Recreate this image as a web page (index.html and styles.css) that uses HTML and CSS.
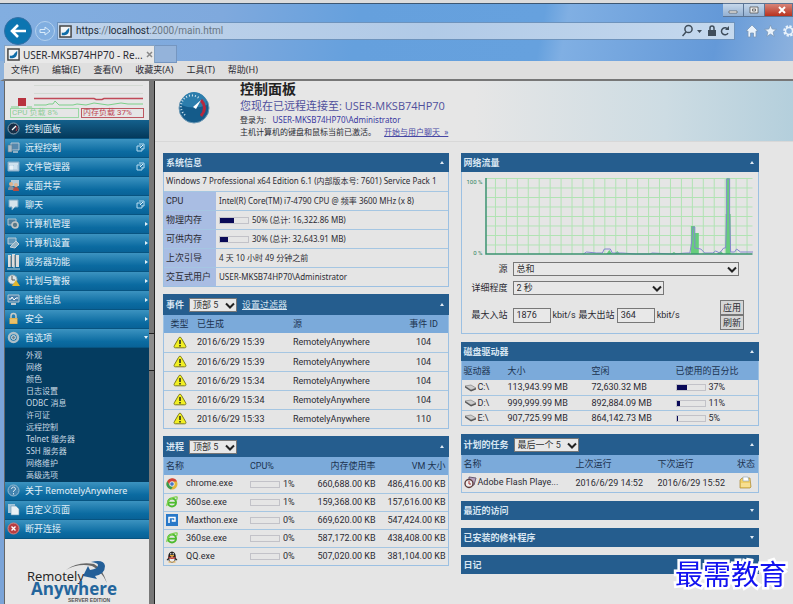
FILE: index.html
```html
<!DOCTYPE html>
<html lang="zh-CN">
<head>
  <meta charset="UTF-8">
  <meta name="viewport" content="width=device-width, initial-scale=1">
  <title>USER-MKSB74HP70 - RemotelyAnywhere</title>
  <link rel="stylesheet" href="styles.css">
</head>
<body>
  <!-- shared icons -->
  <svg class="defs" width="0" height="0">
    <symbol id="favicon" viewBox="0 0 14 14"><path d="M1 1h12v12H1z" fill="#f2f5f7" stroke="#444" stroke-width="1.6"/><path d="M3 8q4 1 5-2l3-3v3q-1 5-5 5H3z" fill="#0f6da8"/></symbol>
    <symbol id="chevron" viewBox="0 0 10 7"><path d="M1 1.5l4 4 4-4" fill="none" stroke="#222" stroke-width="2"/></symbol>
    <symbol id="popout" viewBox="0 0 9 9"><path d="M3 1h5v5H6M5 3H1v5h5V5" fill="none" stroke="#b9dcf0"/><path d="M4 5l3-3" stroke="#e4f3fb"/></symbol>
    <symbol id="warning" viewBox="0 0 14 13"><path d="M7 1.2c.8 0 1 .4 1.4 1.1l4.3 7.5c.6 1.2.2 2-1.1 2H2.4c-1.3 0-1.7-.8-1.1-2l4.300-7.500C6 1.600 6.200 1.200 7 1.200z" fill="#f2ef22" stroke="#7c7a1c"/><path d="M7 4v4M7 9v1.500" stroke="#222" stroke-width="1.500"/></symbol>
    <symbol id="drive" viewBox="0 0 13 8"><path d="M1 2l6-1 5 3-5 2z" fill="#ccc" stroke="#777" stroke-width=".6"/><path d="M1 2l6 4v1.500L1 3.500zM7 6l5-2v1.500L7 7.500z" fill="#555"/></symbol>
    <symbol id="browser360" viewBox="0 0 12 12"><circle cx="6" cy="6.500" r="4" fill="none" stroke="#4dbb2e" stroke-width="2"/><path d="M3 6.700h7" stroke="#4dbb2e" stroke-width="1.800"/><path d="M1 10C0 6 6 0 11 1c.5 1 0 2-.5 3" fill="none" stroke="#7ed24f" stroke-width="1.300"/></symbol>
  </svg>

  <div class="titlebar">
    <div class="window-buttons">
      <button aria-label="最小化"><svg width="10" height="8"><path d="M1 5h8v2H1z" fill="#fff" stroke="#555" stroke-width=".7"/></svg></button>
      <button aria-label="最大化"><svg width="10" height="8"><path d="M1 1h8v6H1zM3.500 3h3v2h-3z" fill="#eee" stroke="#555" stroke-width=".8"/></svg></button>
      <button class="close" aria-label="关闭"><svg width="10" height="8"><path d="M2 1l6 6M8 1L2 7" stroke="#fff" stroke-width="2"/></svg></button>
    </div>
    <div class="navbar">
      <button class="back" aria-label="后退"><svg width="18" height="16" viewBox="0 0 18 16"><path d="M17 8H3M9 2L3 8l6 6" fill="none" stroke="#fff" stroke-width="2.600"/></svg></button>
      <button class="forward" aria-label="前进"><svg width="12" height="12" viewBox="0 0 12 12"><path d="M1 4.500h5V2l5 4-5 4V7.500H1z" fill="none" stroke="#d9ebfa"/></svg></button>
      <div class="address">
        <svg width="13" height="13"><use href="#favicon"/></svg>
        <span class="url"><b>https</b>://<b>localhost</b>:2000/main.html</span>
        <svg width="48" height="14" viewBox="0 0 48 14"><g fill="none" stroke="#3f4d5b" stroke-width="1.500"><circle cx="6.500" cy="5" r="3.600"/><path d="M4 8l-3.500 4"/><path d="M46 5.500a3.500 3.500 0 1 0 0 3.500"/><path d="M28 6V4a2 2 0 0 1 4 0v2"/></g><path d="M15 6h5l-2.500 3zM26 6h8v6h-8zM47 2v4h-4z" fill="#3f4d5b"/></svg>
      </div>
      <svg class="tools" width="50" height="14" viewBox="0 0 50 14"><g fill="#e9f2fb" stroke="#7b98b8" stroke-width=".8"><path d="M1 7l6-6 6 6h-2v6H8.500V9h-3v4H3V7z"/><path d="M25.500 1l1.700 4 4.300.3-3.300 2.800 1 4.400-3.700-2.400-3.700 2.400 1-4.400-3.300-2.800 4.300-.3z"/></g><circle cx="44" cy="7" r="4.500" fill="none" stroke="#e9f2fb" stroke-width="2.600" stroke-dasharray="2.200 1.300"/><circle cx="44" cy="7" r="3.500" fill="none" stroke="#e9f2fb" stroke-width="1.500"/></svg>
    </div>
    <div class="tabs">
      <div class="tab"><svg width="13" height="13"><use href="#favicon"/></svg><span>USER-MKSB74HP70 - Re...</span><button aria-label="关闭标签页"><svg width="7" height="7" viewBox="0 0 7 7"><path d="M1 1l5 5M6 1L1 6" stroke="#888" stroke-width="1.500"/></svg></button></div>
      <button class="new-tab" aria-label="新标签页"></button>
    </div>
  </div>

  <nav class="menubar">
    <button>文件(F)</button><button>编辑(E)</button><button>查看(V)</button><button>收藏夹(A)</button><button>工具(T)</button><button>帮助(H)</button>
  </nav>

  <div class="page">
    <aside class="sidebar">
      <div class="load">
        <svg width="134" height="24" viewBox="0 0 134 24"><path d="M24 1.500h109M24 9.500h109" stroke="#d3d9d3"/><path d="M1 23h8M17 23h5" stroke="#7ccf8a"/><path d="M8 14h8v8H8z" fill="#b8323f"/><path d="M24 14.500h60l2 1h6l2-1h39" fill="none" stroke="#c04a58" stroke-width="1.500"/><path d="M24 21h12l3-1h4l2-3 4 4h14l4-1 9 1 8-2 14 2 13-2 7 1h15" fill="none" stroke="#7ccf8a"/></svg>
        <div class="load-labels"><span class="cpu">CPU 负载 8%</span><span class="mem">内存负载 37%</span></div>
      </div>
      <ul class="menu">
        <li class="active"><a href="#"><svg width="13" height="13" viewBox="0 0 13 13"><circle cx="6.500" cy="6.500" r="5.500" fill="#172f47" stroke="#8ba4b5"/><path d="M5 8l4-4" stroke="#fff" stroke-width="1.300"/><path d="M9.500 4q1.500 3-.5 5" fill="none" stroke="#b9404a"/></svg><span>控制面板</span></a></li>
        <li><a href="#"><svg width="13" height="13" viewBox="0 0 13 13"><path d="M4 2h8v7H4z" fill="#5688ad" stroke="#b7c6d2"/><path d="M1 4h4v7H1z" fill="#aebcc6" stroke="#607d91" stroke-width=".6"/><path d="M6 11h5" stroke="#b7c6d2" stroke-width="1.500"/></svg><span>远程控制</span><svg class="pop"><use href="#popout"/></svg></a></li>
        <li><a href="#"><svg width="13" height="13" viewBox="0 0 13 13"><path d="M1 2h11v9H1z" fill="#b5d0e3" stroke="#86abc5"/><path d="M2 4h9M3 6h3v3H3zM7 6h3M7 8h3" stroke="#e6f1f8" fill="#e6f1f8"/></svg><span>文件管理器</span><svg class="pop"><use href="#popout"/></svg></a></li>
        <li><a href="#"><svg width="13" height="13" viewBox="0 0 13 13"><path d="M4 1h8v6H4z" fill="#b3c9d8"/><circle cx="4" cy="5" r="2" fill="#ddb28b"/><path d="M1 11q0-4 3-4t3 4z" fill="#8a8e99"/><circle cx="9" cy="6" r="2" fill="#e1b692"/><path d="M6 12q0-4 3-4t3 4z" fill="#b64c40"/></svg><span>桌面共享</span></a></li>
        <li><a href="#"><svg width="13" height="13" viewBox="0 0 13 13"><path d="M2 2h9v7H8l-3 3V9H2z" fill="#d6e4ec" stroke="#7ba9c5"/></svg><span>聊天</span><svg class="pop"><use href="#popout"/></svg></a></li>
        <li class="sub"><a href="#"><svg width="13" height="13" viewBox="0 0 13 13"><path d="M1 2h8v6H1z" fill="#52809d" stroke="#abc4d1"/><circle cx="8" cy="8" r="3" fill="#587989" stroke="#c1c5c4" stroke-width="1.700"/></svg><span>计算机管理</span></a></li>
        <li class="sub"><a href="#"><svg width="13" height="13" viewBox="0 0 13 13"><path d="M1 2h8v6H1z" fill="#6197b9" stroke="#b8cbd6"/><path d="M3 11l6-6 3 3-4 4z" fill="#8fb2c5" stroke="#c4d3dc"/></svg><span>计算机设置</span></a></li>
        <li class="sub"><a href="#"><svg width="13" height="16" viewBox="0 0 13 16"><path d="M1 1h3v12H1zM5 0h3v13H5zM9 1h3v12H9z" fill="#ddd"/><path d="M8 1v12M4 2v11" stroke="#777"/><path d="M0 15h13M7 11v3" stroke="#bdd2dc"/></svg><span>服务器功能</span></a></li>
        <li class="sub"><a href="#"><svg width="13" height="13" viewBox="0 0 13 13"><circle cx="5.500" cy="5.500" r="4.500" fill="#dce4e6" stroke="#9cabb0"/><path d="M5 2v4h3" fill="none" stroke="#555"/><path d="M9 6l4 6H5z" fill="#e0b62d"/></svg><span>计划与警报</span></a></li>
        <li class="sub"><a href="#"><svg width="13" height="13" viewBox="0 0 13 13"><path d="M1 2h11v7H1z" fill="#467faa" stroke="#b6c8d3"/><path d="M2 6h2l1-2 2 3 2-2h2" fill="none" stroke="#fff"/><path d="M4 11h5" stroke="#bdc9d0" stroke-width="2"/></svg><span>性能信息</span></a></li>
        <li class="sub"><a href="#"><svg width="13" height="13" viewBox="0 0 13 13"><path d="M4 6V4a2.500 2.500 0 0 1 5 0v2" fill="none" stroke="#c9ccc8" stroke-width="1.500"/><path d="M2.500 6h8v6h-8z" fill="#e0b14e"/><path d="M3 8h7M3 10h7" stroke="#efcf87"/></svg><span>安全</span></a></li>
        <li class="sub open"><a href="#"><svg width="13" height="13" viewBox="0 0 13 13"><circle cx="6.500" cy="6.500" r="4.500" fill="none" stroke="#aebfc8" stroke-width="2.500"/><circle cx="6.500" cy="6.500" r="2" fill="#6a8696" stroke="#d7dde0"/></svg><span>首选项</span></a></li>
      </ul>
      <ul class="submenu">
        <li><a href="#">外观</a></li>
        <li><a href="#">网络</a></li>
        <li><a href="#">颜色</a></li>
        <li><a href="#">日志设置</a></li>
        <li><a href="#">ODBC 消息</a></li>
        <li><a href="#">许可证</a></li>
        <li><a href="#">远程控制</a></li>
        <li><a href="#">Telnet 服务器</a></li>
        <li><a href="#">SSH 服务器</a></li>
        <li><a href="#">网络维护</a></li>
        <li><a href="#">高级选项</a></li>
      </ul>
      <ul class="menu">
        <li><a href="#"><svg width="13" height="13" viewBox="0 0 13 13"><circle cx="6.500" cy="6.500" r="5.500" fill="#4484b0" stroke="#96bcd3"/><path d="M4.500 5q0-2 2-2t2 2q0 1-2 2v1M6.500 9v1.500" fill="none" stroke="#d2e3ed"/></svg><span>关于 RemotelyAnywhere</span></a></li>
        <li><a href="#"><svg width="13" height="13" viewBox="0 0 13 13"><path d="M1 1h7v9H1z" fill="#a6c6da"/><path d="M4 3h5l3 3v6H4z" fill="#e9f0f4" stroke="#6796b4" stroke-width=".6"/></svg><span>自定义页面</span></a></li>
        <li><a href="#"><svg width="13" height="13" viewBox="0 0 13 13"><circle cx="6.500" cy="6.500" r="5.500" fill="#b83e42" stroke="#d98582"/><path d="M4.500 4.500l4 4M8.500 4.500l-4 4" stroke="#fff" stroke-width="1.400"/></svg><span>断开连接</span></a></li>
      </ul>
      <div class="logo">
        <svg width="110" height="44" viewBox="0 0 110 44" role="img" aria-label="RemotelyAnywhere Server Edition">
          <path d="M44 10Q56 1 72 4q8 4 13 19Q79 10 70 6 56 3 44 10z" fill="#666"/>
          <path d="M69 2q13-3 14 4 0 8-10 10l2 3-14-3 5-10 2 4q8-1 8-5 0-2-7-3z" fill="#245f98"/>
          <text class="logo-top" x="5" y="21">Remotely</text>
          <text class="logo-main" x="9" y="35">Anywhere</text>
          <text class="logo-small" x="46" y="42">SERVER EDITION</text>
        </svg>
      </div>
    </aside>
    <div class="splitter"><span></span></div>

    <main>
      <header class="banner">
        <svg width="32" height="32" viewBox="0 0 32 32"><circle cx="16" cy="16" r="15" fill="#145b8a" stroke="#6d99b5"/><path d="M3 13a13 13 0 0 1 26 0q-13 5-26 0z" fill="#2c7dac"/><path d="M7 23a11 11 0 1 1 15-16" fill="none" stroke="#d6e8f1" stroke-width="2" stroke-dasharray="1 2"/><path d="M23 8q7 8 0 16" fill="none" stroke="#b5283d" stroke-width="3"/><path d="M23 8l-5 9-3-2z" fill="#fff"/></svg>
        <div>
          <h1>控制面板</h1>
          <p class="connected">您现在已远程连接至: USER-MKSB74HP70</p>
          <p class="login">登录为: &nbsp; <span>USER-MKSB74HP70\Administrator</span></p>
          <p class="status">主机计算机的键盘和鼠标当前已激活。 <a href="#">开始与用户聊天 &nbsp;»</a></p>
        </div>
      </header>

      <div class="columns">
        <div class="column">
          <section class="panel">
            <div class="panel-head"><h2>系统信息</h2><i class="up"></i></div>
            <table class="sysinfo">
              <colgroup><col class="c-label"><col></colgroup>
              <tr><td colspan="2">Windows 7 Professional x64 Edition 6.1 (内部版本号: 7601) Service Pack 1</td></tr>
              <tr><th>CPU</th><td>Intel(R) Core(TM) i7-4790 CPU @ 频率 3600 MHz (x 8)</td></tr>
              <tr><th>物理内存</th><td><span class="bar"><i style="width: 50%"></i></span>50% (总计: 16,322.86 MB)</td></tr>
              <tr><th>可供内存</th><td><span class="bar"><i style="width: 30%"></i></span>30% (总计: 32,643.91 MB)</td></tr>
              <tr><th>上次引导</th><td>4 天 10 小时 49 分钟之前</td></tr>
              <tr><th>交互式用户</th><td>USER-MKSB74HP70\Administrator</td></tr>
            </table>
          </section>

          <section class="panel">
            <div class="panel-head tall"><h2>事件</h2><div class="select short"><select aria-label="事件数量"><option>顶部 5</option></select><svg><use href="#chevron"/></svg></div><a href="#">设置过滤器</a><i class="up"></i></div>
            <table class="events">
              <colgroup><col class="c-type"><col class="c-date"><col><col class="c-id"></colgroup>
              <thead><tr><th>类型</th><th>已生成</th><th>源</th><th>事件 ID</th></tr></thead>
              <tbody>
                <tr><td><svg><use href="#warning"/></svg></td><td>2016/6/29 15:39</td><td>RemotelyAnywhere</td><td>104</td></tr>
                <tr><td><svg><use href="#warning"/></svg></td><td>2016/6/29 15:39</td><td>RemotelyAnywhere</td><td>104</td></tr>
                <tr><td><svg><use href="#warning"/></svg></td><td>2016/6/29 15:34</td><td>RemotelyAnywhere</td><td>104</td></tr>
                <tr><td><svg><use href="#warning"/></svg></td><td>2016/6/29 15:34</td><td>RemotelyAnywhere</td><td>104</td></tr>
                <tr><td><svg><use href="#warning"/></svg></td><td>2016/6/29 15:33</td><td>RemotelyAnywhere</td><td>110</td></tr>
              </tbody>
            </table>
          </section>

          <section class="panel">
            <div class="panel-head tall"><h2>进程</h2><div class="select short"><select aria-label="进程数量"><option>顶部 5</option></select><svg><use href="#chevron"/></svg></div><i class="up"></i></div>
            <table class="processes">
              <colgroup><col class="c-name"><col class="c-cpu"><col><col class="c-vm"></colgroup>
              <thead><tr><th>名称</th><th>CPU%</th><th>内存使用率</th><th>VM 大小</th></tr></thead>
              <tbody>
                <tr><td><svg viewBox="0 0 12 12"><circle cx="6" cy="6" r="5.500" fill="#e3b63a"/><path d="M1.200 3.200A5.500 5.500 0 0 1 11 3.500H6L3.500 7z" fill="#d1433a"/><path d="M1.200 3.200L4 8l3 .5-2 3A5.500 5.500 0 0 1 1.200 3.200z" fill="#369a53"/><circle cx="6" cy="6" r="2.300" fill="#4775c4" stroke="#fff" stroke-width=".8"/></svg>chrome.exe</td><td><span class="bar"></span>1%</td><td>660,688.00 KB</td><td>486,416.00 KB</td></tr>
                <tr><td><svg><use href="#browser360"/></svg>360se.exe</td><td><span class="bar"></span>1%</td><td>159,368.00 KB</td><td>157,616.00 KB</td></tr>
                <tr><td><svg viewBox="0 0 12 12"><path d="M0 0h12v12H0z" fill="#2878c8"/><path d="M3 9V3.500h6V7H6.500V5.500" fill="none" stroke="#fff" stroke-width="1.500"/></svg>Maxthon.exe</td><td><span class="bar"></span>0%</td><td>669,620.00 KB</td><td>547,424.00 KB</td></tr>
                <tr><td><svg><use href="#browser360"/></svg>360se.exe</td><td><span class="bar"></span>0%</td><td>587,172.00 KB</td><td>438,408.00 KB</td></tr>
                <tr><td><svg viewBox="0 0 12 12"><ellipse cx="6" cy="6" rx="3.800" ry="5.500" fill="#222"/><path d="M3 6L.5 9l2 .5M9 6l2.500 3-2 .5" fill="#222"/><ellipse cx="6" cy="8.500" rx="2.600" ry="2.500" fill="#eee"/><path d="M2.500 5.500q3.500 2 7 0v1.500q-3.500 2-7 0z" fill="#c53a32"/><path d="M4 4.500h4l-2 1zM2.500 11h3M6.500 11h3" fill="#e5a638" stroke="#e5a638"/><path d="M4.800 2v1.500M7.200 2v1.500" stroke="#fff"/></svg>QQ.exe</td><td><span class="bar"></span>0%</td><td>507,020.00 KB</td><td>381,104.00 KB</td></tr>
              </tbody>
            </table>
          </section>
        </div>

        <div class="column right">
          <section class="panel">
            <div class="panel-head"><h2>网络流量</h2><i class="up"></i></div>
            <div class="traffic">
              <div class="chart">
                <div class="scale"><span>100 %</span><span>0 %</span></div>
                <svg viewBox="0 0 270 78" preserveAspectRatio="none">
                  <defs><pattern id="grid" width="11" height="9.500" patternUnits="userSpaceOnUse"><path d="M10.500 0v9.500M0 .5h11" fill="none" stroke="#b0e3b3"/></pattern></defs>
                  <path d="M1 0h268v76H1z" fill="url(#grid)"/>
                  <path d="M207 76V48h4v7h4v21zM242 76V36h1V0h3v36h1v40zM122 76l3-4 3 4zM130 76l3-3 3 3zM187 76l3-2 3 2zM233 76l4-3 3 3z" fill="#66cd7c"/>
                  <path d="M99 76l3-2 10 1h6l2-4h6l2 4h10l14 1h14l2-1 20 1 15-1h3l2-12 1-14h2v21l6 1 4 4h8l3-2 4 2 4-5h2l1-33V1h3v35l1 38h4l2-3 4 3h13" fill="none" stroke="#8587cf"/>
                  <path d="M1 0v76h268" fill="none" stroke="#3b9270" stroke-width="1.500"/>
                </svg>
              </div>
              <form class="options">
                <label for="source">源</label>
                <div class="select wide"><select id="source"><option>总和</option></select><svg><use href="#chevron"/></svg></div>
                <label for="detail">详细程度</label>
                <div class="select mid"><select id="detail"><option>2 秒</option></select><svg><use href="#chevron"/></svg></div>
                <label for="max-in">最大入站</label>
                <div class="limits">
                  <input id="max-in" type="text" value="1876"><span>kbit/s</span>
                  <label for="max-out">最大出站</label><input id="max-out" type="text" value="364"><span>kbit/s</span>
                  <div class="buttons"><button type="submit">应用</button><button type="button">刷新</button></div>
                </div>
              </form>
            </div>
          </section>

          <section class="panel">
            <div class="panel-head"><h2>磁盘驱动器</h2><i class="up"></i></div>
            <table class="disks">
              <colgroup><col class="c-drive"><col class="c-size"><col class="c-size"><col></colgroup>
              <thead><tr><th>驱动器</th><th>大小</th><th>空闲</th><th>已使用的百分比</th></tr></thead>
              <tbody>
                <tr><td><svg><use href="#drive"/></svg>C:\</td><td>113,943.99 MB</td><td>72,630.32 MB</td><td><span class="bar"><i style="width: 37%"></i></span>37%</td></tr>
                <tr><td><svg><use href="#drive"/></svg>D:\</td><td>999,999.99 MB</td><td>892,884.09 MB</td><td><span class="bar"><i style="width: 11%"></i></span>11%</td></tr>
                <tr><td><svg><use href="#drive"/></svg>E:\</td><td>907,725.99 MB</td><td>864,142.73 MB</td><td><span class="bar"><i style="width: 5%"></i></span>5%</td></tr>
              </tbody>
            </table>
          </section>

          <section class="panel">
            <div class="panel-head tall"><h2>计划的任务</h2><div class="select last"><select aria-label="任务数量"><option>最后一个 5</option></select><svg><use href="#chevron"/></svg></div><i class="up"></i></div>
            <table class="tasks">
              <colgroup><col class="c-task"><col class="c-run"><col><col class="c-state"></colgroup>
              <thead><tr><th>名称</th><th>上次运行</th><th>下次运行</th><th>状态</th></tr></thead>
              <tbody>
                <tr><td><svg viewBox="0 0 13 13"><path d="M5 1l7 1-2 7-5 1z" fill="#b9a4be" stroke="#695d74"/><circle cx="5" cy="7.500" r="4" fill="#eee" stroke="#5d3b3b" stroke-width="1.400"/><path d="M5 5v3h2" fill="none" stroke="#a33"/></svg>Adobe Flash Playe...</td><td>2016/6/29 14:52</td><td>2016/6/29 15:52</td><td><svg viewBox="0 0 13 13"><path d="M1 4l2-2h8l1 9-1 1H1z" fill="#f0cf68" stroke="#a98635" stroke-width=".7"/><path d="M4 1h5l1 4H4z" fill="#fff" stroke="#89a0b0" stroke-width=".6"/><path d="M2 7h9v4H2z" fill="#f7df91"/></svg></td></tr>
              </tbody>
            </table>
          </section>

          <section class="panel closed"><div class="panel-head"><h2>最近的访问</h2><i class="down"></i></div></section>
          <section class="panel closed"><div class="panel-head"><h2>已安装的修补程序</h2><i class="down"></i></div></section>
          <section class="panel closed"><div class="panel-head"><h2>日记</h2></div></section>
        </div>
      </div>
    </main>
  </div>
  <div class="watermark">最需教育</div>
</body>
</html>
```

FILE: styles.css
```css
* {
  box-sizing: border-box;
}

body {
  margin: 0;
  height: 100vh;
  overflow: hidden;
  display: flex;
  flex-direction: column;
  background: #e5e5e5;
  color: #2b2b33;
  font-family: "Noto Sans", "Noto Sans CJK SC", sans-serif;
  font-size: 9px;
  line-height: 12px;
}

h1, h2, p, ul {
  margin: 0;
  padding: 0;
}

ul {
  list-style: none;
}

button, input, select {
  font: inherit;
  color: inherit;
  margin: 0;
}

svg {
  flex: none;
}

.defs {
  position: absolute;
}

/* browser window */
.titlebar {
  position: relative;
  flex: none;
  height: 61px;
  padding-top: 14px;
  border-top: 3px solid #dcdcdc;
  box-shadow: inset 0 1px #3d5772;
  background: linear-gradient(100deg, #82aee0 0%, #7fa9dd 28%, #65a0dd 45%, #66a1de 68%, #80afe3 71%, #6499d8 90%, #8db2de 100%);
}

.window-buttons {
  position: absolute;
  top: 0;
  right: 0;
  display: flex;
}

.window-buttons button {
  width: 21px;
  height: 14px;
  padding: 0;
  border: 1px solid #5c7595;
  border-left: none;
  background: linear-gradient(#c5d7ea, #93b0d2);
  line-height: 8px;
}

.window-buttons .close {
  width: 28px;
  padding-left: 6px;
  background: linear-gradient(#d78478, #b9321e);
}

.navbar {
  display: flex;
  align-items: center;
  height: 28px;
  padding-left: 4px;
}

.navbar button {
  display: flex;
  align-items: center;
  justify-content: center;
  border-radius: 50%;
  padding: 0;
}

.back {
  width: 28px;
  height: 28px;
  border: 1px solid #3470a6;
  background: #0c75b1;
}

.forward {
  width: 20px;
  height: 20px;
  margin: 0 2px 0 3px;
  border: 1px solid #b2d0ee;
  background: #80aee0;
}

.address {
  flex: 1;
  display: flex;
  align-items: center;
  gap: 4px;
  height: 18px;
  padding: 0 4px 0 1px;
  border: 1px solid #6d93bd;
  background: linear-gradient(100deg, #bfd3ea, #b1cae7 55%, #c5d9ee);
}

.url {
  flex: 1;
  color: #687683;
  font-family: Roboto, sans-serif;
  font-size: 10px;
}

.url b {
  font-weight: normal;
  color: #1f2d39;
}

.tools {
  margin: 0 -2px 0 10px;
}

.tabs {
  display: flex;
  height: 18px;
  margin-left: 4px;
}

.tab {
  display: flex;
  align-items: center;
  gap: 3px;
  width: 151px;
  padding-left: 2px;
  background: #e8e8e8;
  border: 1px solid #86a3c3;
  border-bottom: none;
  font-size: 10px;
  white-space: nowrap;
}

.tab span {
  flex: 1;
}

.tab button {
  display: flex;
  border: none;
  background: none;
  padding: 0 4px 0 0;
}

.new-tab {
  width: 22px;
  border: 1px solid #7596c0;
  border-left: none;
  background: #94b3da;
}

.menubar {
  flex: none;
  display: flex;
  align-items: center;
  gap: 13px;
  height: 20px;
  padding-left: 7px;
  border-left: 4px solid #8fb3dc;
  border-bottom: 2px solid #777;
  background: #dfdfdf;
}

.menubar button {
  border: none;
  background: none;
  padding: 0;
}

.page {
  flex: 1;
  min-height: 0;
  display: flex;
  border-left: 4px solid #7ba4d8;
}

/* left menu */
.sidebar {
  flex: none;
  display: flex;
  flex-direction: column;
  width: 145px;
  border-left: 1px solid #666;
  background: #e6e6e6;
}

.load {
  flex: none;
  height: 39px;
  padding: 3px 5px 0;
}

.load > svg {
  display: block;
}

.load-labels {
  display: flex;
  gap: 2px;
  font-family: Roboto, "Noto Sans CJK SC", sans-serif;
  font-size: 8px;
  line-height: 8px;
}

.load-labels span {
  height: 10px;
  padding-left: 1px;
  white-space: nowrap;
}

.cpu {
  width: 69px;
  border: 1px solid #9bd8a4;
  color: #8fcc98;
}

.mem {
  width: 63px;
  border: 1px solid #bd5862;
  color: #bf4452;
}

.menu {
  flex: none;
}

.menu a {
  display: flex;
  align-items: center;
  gap: 5px;
  height: 19px;
  padding: 0 4px 1px 2px;
  border-bottom: 1px solid #075481;
  background: linear-gradient(#3c93c0, #0b6ba1 70%, #086297);
  color: #e2f0f8;
  text-decoration: none;
}

.menu a > svg {
  width: 13px;
}

.menu a span {
  flex: 1;
}

.menu .active a {
  background: linear-gradient(#14608c, #04395b);
}

.menu .pop {
  width: 9px;
  height: 9px;
}

.menu .sub a {
  padding-right: 1px;
}

.menu .sub a::after {
  content: "";
  border: 2px solid transparent;
  border-left: 3px solid #e2f0f8;
  border-right: none;
}

.menu .sub.open a::after {
  border: 2px solid transparent;
  border-top: 3px solid #e2f0f8;
  border-bottom: none;
}

.submenu {
  flex: none;
  padding: 1px 0 1px 21px;
  background: #043c60;
  font-size: 8px;
}

.submenu a {
  display: block;
  height: 12px;
  color: #c7d8e2;
  text-decoration: none;
}

.logo {
  padding: 21px 0 0 17px;
}

.logo-top {
  font: 13px "Open Sans", sans-serif;
  fill: #222;
}

.logo-main {
  font: bold 17px "Open Sans", sans-serif;
  fill: #24659c;
}

.logo-small {
  font: bold 5px "Liberation Sans", sans-serif;
  fill: #555;
}

.splitter {
  flex: none;
  width: 6px;
  padding-top: 252px;
  border-right: 1px solid #222;
  background: #777;
}

.splitter span {
  display: block;
  height: 38px;
  border: solid #222;
  border-width: 1px 0;
  background: #8d8d8d;
}

/* content */
main {
  flex: 1;
  min-width: 0;
}

.banner {
  display: flex;
  gap: 30px;
  height: 61px;
  padding-left: 23px;
  border-bottom: 1px solid #d8d8d8;
  background: linear-gradient(to right, #e6e6e6 50%, #cddce3 80%, #b4cfdc);
}

.banner > svg {
  margin-top: 11px;
}

.banner h1 {
  font-family: "Noto Sans CJK SC", sans-serif;
  font-size: 14px;
  line-height: 14px;
  color: #222;
}

.connected {
  padding-top: 3px;
  font-family: "Open Sans", "Noto Sans CJK SC", sans-serif;
  font-size: 11px;
  line-height: 16px;
  color: #50509c;
}

.login {
  font-size: 8px;
  line-height: 12px;
}

.login span {
  color: #3838a0;
}

.status {
  font-size: 8px;
  line-height: 12px;
}

.status a {
  margin-left: 6px;
  color: #4646a4;
}

.columns {
  display: grid;
  grid-template-columns: 286fr 299fr;
  gap: 12px;
  padding: 11px 34px 0 8px;
  font-family: Roboto, "Noto Sans CJK SC", sans-serif;
}

.column {
  display: flex;
  flex-direction: column;
  gap: 7px;
  min-width: 0;
}

.column.right {
  gap: 8px;
}

.panel {
  border: 1px solid #9cc0e2;
  border-top: none;
}

.panel.closed {
  border-width: 0 1px;
}

.panel-head {
  display: flex;
  align-items: center;
  gap: 5px;
  height: 19px;
  margin: 0 -1px;
  padding: 0 5px 0 3px;
  background: #255d8e;
  color: #d8e6f2;
}

.panel-head.tall {
  height: 21px;
}

.panel-head h2 {
  font-size: 9px;
  line-height: 12px;
}

.panel-head a {
  color: inherit;
}

.panel-head i {
  margin-left: auto;
  border: 2px solid transparent;
}

.panel-head .up {
  border-bottom: 3px solid #dfeaf4;
  border-top: none;
}

.panel-head .down {
  border-top: 3px solid #dfeaf4;
  border-bottom: none;
}

.select {
  position: relative;
  height: 14px;
}

.select select {
  display: block;
  appearance: none;
  width: 100%;
  height: 100%;
  padding: 0 3px;
  border: 1px solid #777;
  border-radius: 0;
  background: #e8e8e8;
  color: #333;
  line-height: 12px;
}

.select svg {
  position: absolute;
  top: 4px;
  right: 2px;
  width: 10px;
  height: 7px;
  pointer-events: none;
}

.select.short {
  width: 48px;
}

.select.last {
  width: 65px;
}

table {
  width: 100%;
  table-layout: fixed;
  border-collapse: collapse;
}

th, td {
  height: 19px;
  padding: 0 2px;
  text-align: left;
  font-weight: normal;
  white-space: nowrap;
}

tr + tr td, tr + tr th {
  border-top: 1px solid #a5c6e2;
}

thead th {
  height: 18px;
  background: #7baada;
  color: #1c3350;
}

td svg {
  width: 12px;
  height: 12px;
  vertical-align: middle;
}

.sysinfo th {
  background: #a9bde3;
}

.sysinfo td {
  font-family: "Noto Sans", "Noto Sans CJK SC", sans-serif;
  font-size: 8px;
}

.sysinfo th + td {
  padding-left: 3px;
}

.bar {
  display: inline-block;
  width: 30px;
  height: 7px;
  margin-right: 3px;
  border: 1px solid #c2c2c8;
  vertical-align: middle;
}

.bar i {
  display: block;
  height: 5px;
  background: #0a0a58;
}

.c-label { width: 52px; }
.c-type { width: 31px; }
.c-date { width: 96px; }
.c-id { width: 48px; }
.c-name { width: 84px; }
.c-cpu { width: 52px; }
.c-vm { width: 70px; }
.c-drive { width: 44px; }
.c-size { width: 84px; }
.c-task { width: 112px; }
.c-run { width: 82px; }
.c-state { width: 24px; }

.events th:first-child, .events td:first-child,
.events th:last-child, .events td:last-child {
  padding: 0;
  text-align: center;
}

.events td svg {
  width: 14px;
  height: 13px;
}

.processes td {
  height: 18px;
}

.processes td:first-child svg {
  margin-right: 8px;
}

.processes th:nth-child(n+3), .processes td:nth-child(n+3) {
  text-align: right;
}

.disks th {
  height: 19px;
}

.disks td {
  height: 15px;
}

.disks td svg {
  width: 13px;
  height: 8px;
  margin-right: 1px;
}

.tasks td svg {
  width: 13px;
  height: 13px;
  margin-right: 1px;
}

.tasks th:last-child, .tasks td:last-child {
  padding: 0;
  text-align: center;
}

.traffic {
  padding: 6px 5px 3px;
}

.chart {
  display: flex;
  gap: 2px;
  height: 78px;
}

.chart > svg {
  flex: 1;
  min-width: 0;
  height: 78px;
}

.scale {
  display: flex;
  flex-direction: column;
  justify-content: space-between;
  width: 16px;
  text-align: right;
  color: #2f8260;
  font-size: 6px;
  line-height: 7px;
  white-space: nowrap;
}

.options {
  display: grid;
  grid-template-columns: 41px 1fr;
  grid-template-rows: 14px 14px 30px;
  align-items: center;
  gap: 5px;
  padding-top: 6px;
}

.options > label {
  text-align: right;
  white-space: nowrap;
}

.options .wide {
  width: 94%;
}

.options .mid {
  width: 63%;
}

.limits {
  display: flex;
  align-items: center;
  gap: 2px;
  white-space: nowrap;
}

.limits label {
  margin-left: 1px;
}

.limits input {
  width: 38px;
  height: 15px;
  padding: 0 3px;
  border: 1px solid #777;
  background: #e8e8e8;
}

.buttons {
  display: flex;
  flex-direction: column;
  margin: 0 9px 0 auto;
}

.buttons button {
  width: 24px;
  height: 15px;
  padding: 0;
  border: 1px solid #777;
  background: #d6d6d6;
}

.watermark {
  position: fixed;
  right: 6px;
  bottom: 14px;
  color: #1212f0;
  font: 28px/34px "Noto Sans CJK SC", sans-serif;
  -webkit-text-stroke: 5px #fff;
  paint-order: stroke fill;
}
```
